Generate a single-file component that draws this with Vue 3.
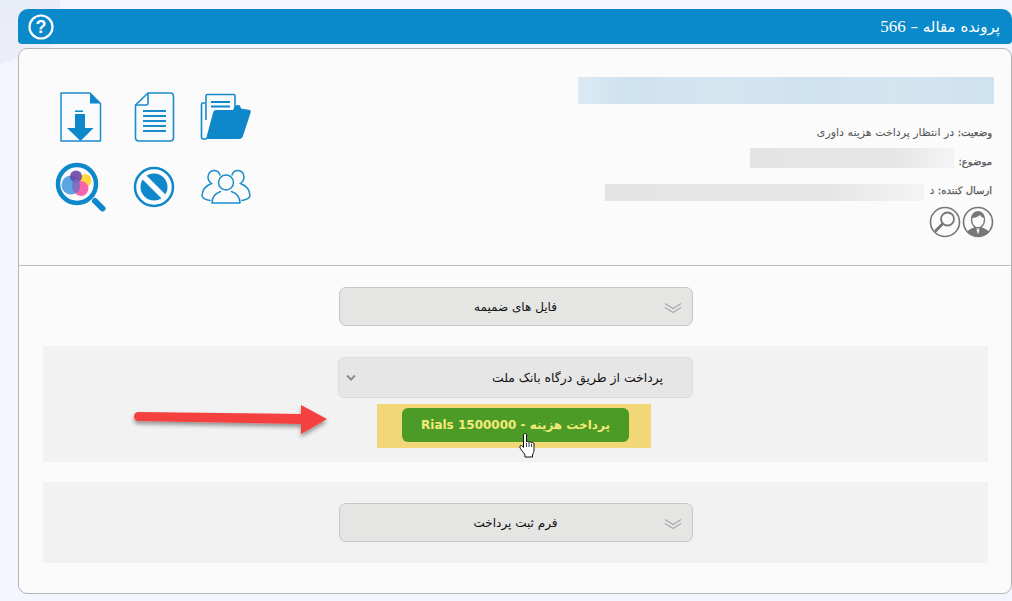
<template>
  <div class="page">
    <div class="header">
      <span class="title">پرونده مقاله – <span class="num">566</span></span>
      <svg class="help" viewBox="0 0 26 26" width="26" height="26">
        <circle cx="13" cy="13" r="11.5" fill="none" stroke="#fff" stroke-width="2.2" />
        <text x="13" y="19" text-anchor="middle" class="help-q">?</text>
      </svg>
    </div>

    <div class="panel">
      <div class="top">
        <div class="info">
          <div class="blur-title"></div>
          <div class="row"><b>وضعیت:</b> در انتظار پرداخت هزینه داوری</div>
          <div class="row"><b>موضوع:</b><span class="blur blur-subject"></span></div>
          <div class="row"><b>ارسال کننده:</b> د<span class="blur blur-sender"></span></div>
          <div class="mini-icons">
            <svg viewBox="0 0 32 32" width="32" height="32">
              <circle cx="16" cy="16" r="14.5" fill="none" stroke="#777" stroke-width="1.6" />
              <path d="M9.5 13.5c0-5 3-7.5 6.5-7.5s6.5 2.5 6.5 7.5c0 5-3 8.5-6.5 8.5s-6.5-3.5-6.5-8.5z" fill="none" stroke="#777" stroke-width="1.4" />
              <path d="M10 12c3 0 6-1 8-3 1 2 3 3 4 3 0-4-2-6.5-6-6.5s-6 2.5-6 6.5z" fill="#777" />
              <path d="M5 26c2-3 6-4 8-5l3 3 3-3c2 1 6 2 8 5-3 3-7 4.5-11 4.5s-8-1.5-11-4.5z" fill="#777" />
              <path d="M14.5 23.5h3l-1.5 5z" fill="#fff" />
            </svg>
            <svg viewBox="0 0 32 32" width="32" height="32">
              <circle cx="16" cy="16" r="14.5" fill="none" stroke="#777" stroke-width="1.6" />
              <circle cx="18.5" cy="13" r="6.5" fill="none" stroke="#777" stroke-width="1.8" />
              <path d="M13.5 18l-6.5 6.5" stroke="#777" stroke-width="3" stroke-linecap="round" />
            </svg>
          </div>
        </div>

        <div class="tools">
          <svg viewBox="52 89 56 56" width="56" height="56">
            <path d="M61 93h29l10.5 10.5V141H61z" fill="#f8fafc" stroke="#1a8ccb" stroke-width="1.5" stroke-linejoin="round" />
            <path d="M90 93l10.5 10.5H90z" fill="#0e88ca" />
            <path d="M75 110.5h8v1.5h-8zM75 114h10v14h8.5L80.5 141 67 128h8z" fill="#0e88ca" />
          </svg>
          <svg viewBox="126 89 56 56" width="56" height="56">
            <path d="M148 93h22q3.5 0 3.5 3.5v41q0 3.5-3.5 3.5h-31q-3.5 0-3.5-3.5V105z" fill="#f8fafc" stroke="#1a8ccb" stroke-width="1.6" stroke-linejoin="round" />
            <path d="M135.5 105H146q2 0 2-2V93" fill="none" stroke="#1a8ccb" stroke-width="1.6" />
            <path d="M143 111h23M143 116h23M143 121h23M143 126h23M143 131h23" stroke="#1a8ccb" stroke-width="1.8" />
          </svg>
          <svg viewBox="198 89 56 56" width="56" height="56">
            <path d="M205 103h-2q-1.5 0-1.5 1.5V137q0 2 2 2h3" fill="none" stroke="#0e88ca" stroke-width="1.6" />
            <path d="M206 120V96q0-1.5 1.5-1.5H234q1 0 1 1.5v14" fill="#f8fafc" stroke="#1a8ccb" stroke-width="1.6" />
            <path d="M211 102h19M211 106.5h19" stroke="#0e88ca" stroke-width="1.8" />
            <path d="M206 139l7-26q.7-3 3-3h17l2-4q1-1 3-1l2 .5 1 3 9 1.5q1 1 .8 2L243 136q-1 3-4 3z" fill="#0e88ca" />
          </svg>
          <svg viewBox="52 159 56 56" width="56" height="56">
            <circle cx="71" cy="185" r="9.5" fill="#5aa6e2" />
            <circle cx="85" cy="180.5" r="6.5" fill="#ffd83d" />
            <circle cx="81" cy="188.5" r="7.5" fill="#f765ad" />
            <circle cx="76" cy="176.5" r="6" fill="#6b46a6" fill-opacity=".9" />
            <ellipse cx="76" cy="186" rx="4" ry="7" fill="#6d6fc0" fill-opacity=".8" />
            <circle cx="77" cy="184" r="19" fill="none" stroke="#0e88ca" stroke-width="4.5" />
            <path d="M95 201l7.5 7.5" stroke="#0e88ca" stroke-width="6" stroke-linecap="round" />
          </svg>
          <svg viewBox="126 159 56 56" width="56" height="56">
            <circle cx="154" cy="187" r="19" fill="none" stroke="#0e88ca" stroke-width="2.5" />
            <circle cx="154" cy="187" r="13.5" fill="#0e88ca" />
            <path d="M143.5 176.5l21 21" stroke="#fbfbfb" stroke-width="5.5" />
          </svg>
          <svg viewBox="198 159 56 56" width="56" height="56">
            <g fill="none" stroke="#1a8ccb" stroke-width="1.5" stroke-linecap="round">
              <circle cx="226" cy="182.5" r="7.5" />
              <path d="M212 203c0-6 4-10 8.5-11.5M240 203c0-6-4-10-8.5-11.5M212 203h28" />
              <path d="M220 175c-1-3-3-4.5-6-4.5-3.5 0-6 3-6 6.5 0 3 1.5 5 3.5 6.5-4 1.5-9 5-9.5 12 0 2 3 4 8 5" />
              <path d="M232 175c1-3 3-4.5 6-4.5 3.5 0 6 3 6 6.5 0 3-1.5 5-3.5 6.5 4 1.5 9 5 9.5 12 0 2-3 4-8 5" />
            </g>
          </svg>
        </div>
      </div>

      <div class="content">
        <div class="plain">
          <div class="toggle">
            <span>فایل های ضمیمه</span>
            <svg class="chev" viewBox="0 0 18 12" width="18" height="12">
              <path d="M1 1.5l8 5 8-5M1 5.5l8 5 8-5" fill="none" stroke="#aaa" stroke-width="1.3" />
            </svg>
          </div>
        </div>

        <div class="section pay">
          <div class="gateway">
            <span>پرداخت از طریق درگاه بانک ملت</span>
            <svg viewBox="0 0 10 8" width="10" height="8">
              <path d="M1 1.5l4 4 4-4" fill="none" stroke="#8f8f8f" stroke-width="2" />
            </svg>
          </div>
          <div class="highlight">
            <button class="pay-btn">پرداخت هزینه - 1500000 Rials</button>
          </div>
        </div>

        <div class="section form">
          <div class="toggle">
            <span>فرم ثبت پرداخت</span>
            <svg class="chev" viewBox="0 0 18 12" width="18" height="12">
              <path d="M1 1.5l8 5 8-5M1 5.5l8 5 8-5" fill="none" stroke="#aaa" stroke-width="1.3" />
            </svg>
          </div>
        </div>
      </div>
    </div>

    <svg class="arrow" viewBox="0 0 200 36" width="200" height="36">
      <defs>
        <filter id="arrow-shadow" x="-5%" y="-30%" width="110%" height="170%">
          <feDropShadow dx="0" dy="3" stdDeviation="2" flood-color="#000" flood-opacity=".4" />
        </filter>
      </defs>
      <path d="M5 8 168 10V1l26 14-26 15V20L5 17q-4-.5-4-4.5T5 8z" fill="#f5403f" filter="url(#arrow-shadow)" />
    </svg>

    <svg class="hand" viewBox="0 0 16 25" width="16" height="25">
      <path d="M4.5 2c0-2 3-2 3 0v7c0-1 2.5-1 2.5 .5 .2-1 2.5-1 2.5 .5 .3-.8 2.5-.6 2.5 1v6c0 2-.8 3-1.5 5v2H6v-2C4.5 19 1 16 .8 14c-.1-1.5 1.5-2 2.5-1l1.2 1.5z" fill="#fff" stroke="#111" stroke-width="1" stroke-linejoin="round" />
      <path d="M7.5 10v4M10 10v4M12.5 11v3" stroke="#111" stroke-width=".8" />
    </svg>
  </div>
</template>

<script setup>
</script>

<style>
html, body {
  margin: 0;
  background: #f3f6fe;
}
</style>

<style scoped>
.page {
  position: relative;
  width: 1012px;
  height: 601px;
  overflow: hidden;
  padding: 9px 0 0 18px;
  box-sizing: border-box;
  background:
    linear-gradient(160deg, #e8ecf5 0, #eceff7 60px, rgba(243, 246, 254, 0) 61px) no-repeat left top / 60px 110px,
    #f3f6fe;
  font-family: "DejaVu Sans", "Liberation Sans", sans-serif;
  direction: rtl;
}
.header {
  display: flex;
  justify-content: space-between;
  align-items: center;
  height: 35px;
  padding: 0 12px 0 9px;
  background: #0a8aca;
  border-radius: 10px 10px 4px 4px;
  margin-bottom: 4px;
  box-sizing: border-box;
  color: #fff;
}
.title {
  font-size: 15px;
}
.num {
  font-family: "Liberation Serif", serif;
  font-size: 17px;
}
.help {
  margin-left: 1px;
}
.help-q {
  font: bold 18px "Liberation Sans", sans-serif;
  fill: #fff;
}
.panel {
  height: 546px;
  background: #fbfbfb;
  border: 1px solid #b5b5b5;
  border-radius: 9px;
  box-sizing: border-box;
}
.top {
  display: flex;
  justify-content: space-between;
  height: 216px;
  border-bottom: 1px solid #bdbdbd;
}
.info {
  display: flex;
  flex-direction: column;
  width: 416px;
  padding: 28px 17px 0 0;
  font-size: 11px;
  color: #555;
}
.blur-title {
  height: 27px;
  margin-bottom: 14px;
  background: linear-gradient(90deg, #dbe9f3 0, #cfe2ef 12%, #d6e6f1 35%, #cfe2ef 55%, #d5e5f0 75%, #cfe2ef 100%);
}
.row {
  display: flex;
  align-items: center;
  height: 29px;
  white-space: pre;
  padding-right: 2px;
}
.row b {
  font-size: 10px;
  font-weight: 400;
  -webkit-text-stroke: 0.25px #555;
}
.blur {
  display: block;
  background: linear-gradient(90deg, #e4e4e4 0, #e6e6e6 70%, #f4f4f4 100%);
}
.blur-subject {
  width: 204px;
  height: 20px;
  margin: -7px 4px 0 0;
}
.blur-sender {
  width: 319px;
  height: 17px;
  margin: 4px 5px 0 0;
}
.mini-icons {
  display: flex;
  gap: 1px;
  margin-top: 1px;
}
.tools {
  direction: ltr;
  display: grid;
  grid-template-columns: 74px 74px 70px;
  grid-auto-rows: 70px;
  justify-items: center;
  align-items: center;
  align-content: start;
  padding: 33px 0 0 24px;
  width: 218px;
  height: 140px;
}
.content {
  display: flex;
  flex-direction: column;
  align-items: center;
  padding: 21px 23px 0 24px;
}
.plain {
  height: 59px;
}
.section {
  width: 945px;
  background: #f2f2f2;
  display: flex;
  flex-direction: column;
  align-items: center;
  box-sizing: border-box;
}
.pay {
  height: 116px;
  padding-top: 11px;
  margin-bottom: 20px;
}
.form {
  height: 81px;
  padding-top: 21px;
}
.toggle {
  position: relative;
  display: flex;
  justify-content: center;
  align-items: center;
  box-sizing: border-box;
  width: 354px;
  height: 39px;
  background: #e5e5e4;
  border: 1px solid #c6c6c6;
  border-radius: 7px;
  font-size: 12px;
  color: #111;
}
.chev {
  position: absolute;
  right: 10px;
  top: 14px;
}
.gateway {
  display: flex;
  justify-content: space-between;
  align-items: center;
  box-sizing: border-box;
  width: 355px;
  height: 41px;
  padding: 0 29px 0 7px;
  background: #e6e6e6;
  border: 1px solid #dcdcdc;
  border-radius: 6px;
  font-size: 12.4px;
  color: #111;
}
.highlight {
  display: flex;
  box-sizing: border-box;
  width: 274px;
  height: 44px;
  margin: 6px 0 0 -3px;
  padding-top: 4px;
  background: #f1d778;
}
.pay-btn {
  width: 227px;
  height: 34px;
  margin-right: 22px;
  background: #4c9b26;
  color: #f4ea7c;
  border: none;
  border-radius: 6px;
  font-family: inherit;
  font-size: 12px;
  font-weight: 700;
  padding: 0;
}
.arrow {
  position: absolute;
  left: 133px;
  top: 404px;
  overflow: visible;
}
.hand {
  position: absolute;
  left: 519px;
  top: 433px;
}
</style>
